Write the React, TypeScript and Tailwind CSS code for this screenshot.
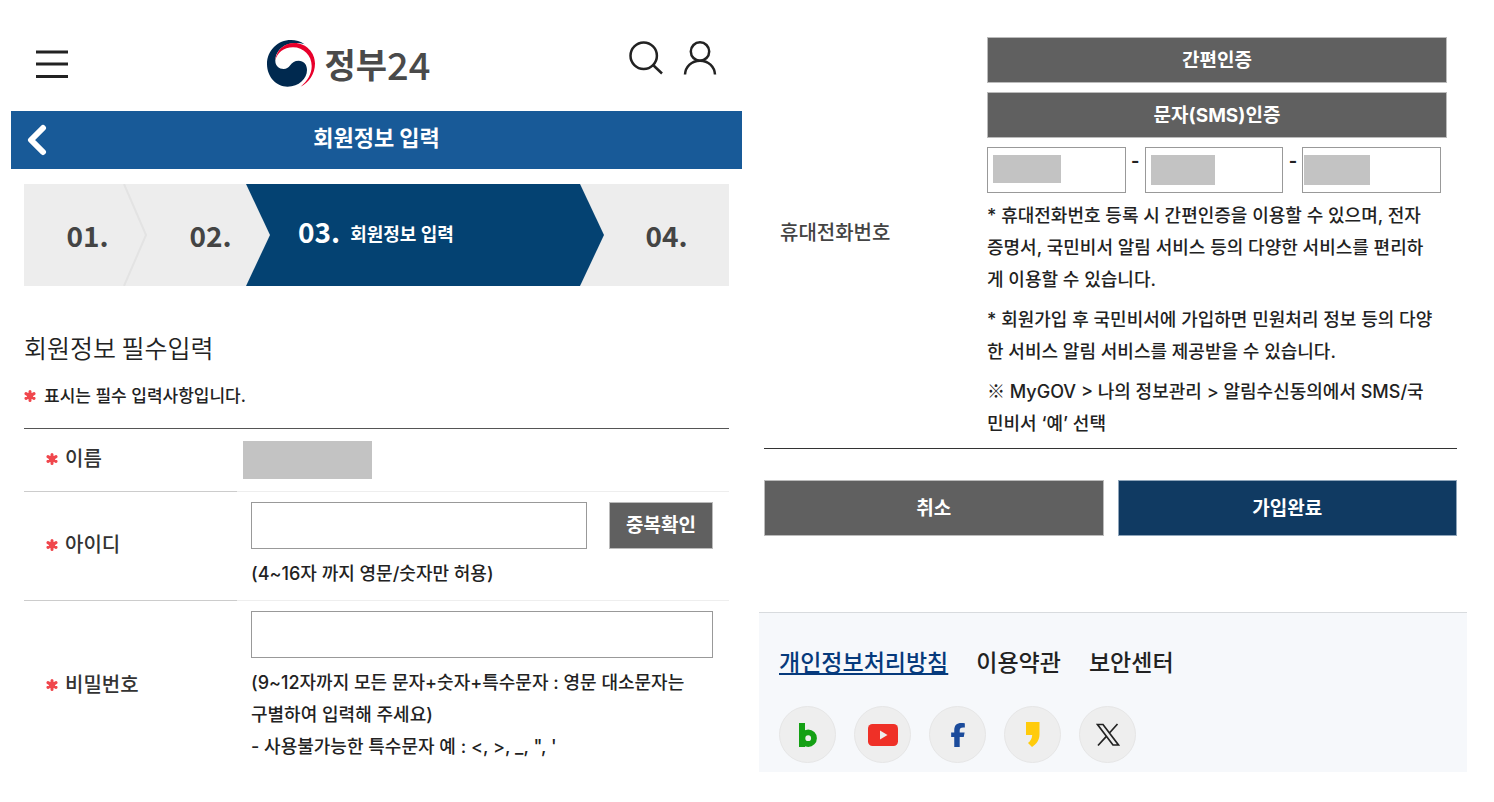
import React from "react";
import { FaFacebookF } from "react-icons/fa6";

function GovLogo() {
  return (
    <svg viewBox="0 0 48 47" className="h-[47px] w-12 shrink-0" aria-hidden="true">
      <path
        fill="#00294f"
        d="M37.5 4.200C33.500 1.300 28.800 0 24 0C10.700 0 0 10.500 0 24C0 37 9.500 46.700 20.500 46.700C32 46.700 40 38.500 40 30C40 24.500 36.500 20.800 31.700 20.800C27.800 20.800 25.200 22.800 23 25.500C21.300 27.700 19.400 29 16.700 29C12 29 8.300 26 8.300 20.500C8.500 12 15 5 24 3.600C29 2.600 33.500 2.900 37.500 4.200Z"
      />
      <path
        fill="#e8002b"
        d="M8.300 20.700C9 10.500 17 3 27.300 3C39 3 48 12.500 48 23.500C48 34 42 42.500 33.500 46.700C40.500 41 44.700 34 44.700 26C44.700 15.500 36.500 7.300 26 7.300C16.500 7.300 10 13 8.300 20.700Z"
      />
    </svg>
  );
}

function RequiredMark() {
  return (
    <svg viewBox="0 0 12 12" className="size-3 shrink-0" role="img" aria-label="필수">
      <g stroke="#f0474d" strokeWidth="3" strokeLinecap="round">
        <path d="M6 1.500V10.500M2 3.600L10 8.400M10 3.600L2 8.400" />
      </g>
      <circle cx="6" cy="6" r="3.200" fill="#f0474d" />
    </svg>
  );
}

const stepText = "ml-7 font-['Noto_Sans_CJK_KR',sans-serif] text-[28px] leading-none font-bold text-[#444]";

function Steps() {
  return (
    <ol className="flex h-[102px] bg-[#ededed]">
      <li className="flex flex-[99] items-center justify-center">
        <span className={stepText}>01.</span>
      </li>
      <li aria-hidden="true" className="w-6 shrink-0">
        <svg viewBox="0 0 24 102" preserveAspectRatio="none" className="size-full">
          <path d="M1 0L23 51L1 102" fill="none" stroke="#e3e3e3" strokeWidth="2" />
        </svg>
      </li>
      <li className="flex flex-[99] items-center justify-center">
        <span className={stepText}>02.</span>
      </li>
      <li aria-hidden="true" className="w-6 shrink-0 bg-[#044272]">
        <svg viewBox="0 0 24 102" preserveAspectRatio="none" className="size-full">
          <path d="M0 0L24 51L0 102Z" fill="#ededed" />
        </svg>
      </li>
      <li aria-current="step" className="flex flex-[310] items-center bg-[#044272] pb-2 text-white">
        <span className="ml-7 font-['Noto_Sans_CJK_KR',sans-serif] text-[28px] leading-none font-bold">03.</span>
        <span className="ml-2.5 pt-2 text-[18px] leading-none font-bold">회원정보 입력</span>
      </li>
      <li aria-hidden="true" className="w-6 shrink-0">
        <svg viewBox="0 0 24 102" preserveAspectRatio="none" className="size-full">
          <path d="M0 0L24 51L0 102Z" fill="#044272" />
        </svg>
      </li>
      <li className="flex flex-[125] items-center justify-center">
        <span className="font-['Noto_Sans_CJK_KR',sans-serif] text-[28px] leading-none font-bold text-[#444]">04.</span>
      </li>
    </ol>
  );
}

function Field({ id, label, children }: { id?: string; label: string; children: React.ReactNode }) {
  return (
    <tr className="group">
      <th scope="row" className="w-[213px] border-[#ccc] p-0 pb-0.5 pl-[22px] text-left align-middle text-[20px] leading-8 font-medium text-[#333] group-not-last:border-b">
        <label htmlFor={id} className="flex items-center gap-[7px]">
          <RequiredMark />
          {label}
        </label>
      </th>
      <td className="border-[#eee] p-0 align-top group-not-last:border-b">{children}</td>
    </tr>
  );
}

const textBox = "h-[47px] w-full min-w-0 border border-[#999] bg-white px-3 text-[18px]";
const grayButton = "border border-[#bbb] bg-[#606060] text-[19px] leading-none font-bold text-white";

function SignupForm() {
  return (
    <section className="min-w-0 flex-[731]">
      <header className="grid h-[111px] grid-cols-[1fr_auto_1fr] items-center px-[25px] pt-4">
        <button type="button" aria-label="전체 메뉴" className="w-8">
          <svg viewBox="0 0 32 30" className="h-[30px] w-8" aria-hidden="true">
            <path d="M0 3H32M0 15H32M0 27.500H32" stroke="#222" strokeWidth="2.800" />
          </svg>
        </button>
        <a href="#home" className="mr-14 flex items-center gap-2.5 font-['Noto_Sans_CJK_KR',sans-serif] text-[#4a4a4a]">
          <GovLogo />
          <span className="flex items-center leading-none">
            <span className="text-[34px] font-bold">정부</span>
            <span className="text-[38px] font-medium">24</span>
          </span>
        </a>
        <div className="flex items-center justify-end gap-5 pb-3">
          <button type="button" aria-label="검색">
            <svg viewBox="0 0 34 34" className="size-[34px]" fill="none" stroke="#222" strokeWidth="2.500" aria-hidden="true">
              <circle cx="14.700" cy="14.700" r="13.200" />
              <path d="M23.500 23.500L33 32.500" />
            </svg>
          </button>
          <button type="button" aria-label="내 정보">
            <svg viewBox="0 0 34 34" className="size-[34px]" fill="none" stroke="#222" strokeWidth="2.500" aria-hidden="true">
              <circle cx="17" cy="10.500" r="9.200" />
              <path d="M2 33.500C2.500 25.500 8.500 19.700 17 19.700S31.500 25.500 32 33.500" />
            </svg>
          </button>
        </div>
      </header>

      <div className="grid h-[58px] grid-cols-[1fr_auto_1fr] items-center bg-[#185a98] text-white">
        <button type="button" aria-label="이전" className="ml-4 w-5">
          <svg viewBox="0 0 20 32" className="h-8 w-5" aria-hidden="true">
            <path d="M16 4L4 16L16 28" fill="none" stroke="white" strokeWidth="6" strokeLinecap="round" strokeLinejoin="round" />
          </svg>
        </button>
        <h1 className="pb-1 text-[22px] leading-none font-bold">회원정보 입력</h1>
      </div>

      <div className="px-[13px] pt-[15px]">
        <Steps />
        <h2 className="mt-[43px] font-['Noto_Sans_CJK_KR',sans-serif] text-[25px] leading-9 font-[350] text-[#222]">회원정보 필수입력</h2>
        <p className="mt-[17px] flex items-center gap-2 text-[17px] leading-7 font-medium text-[#222]">
          <RequiredMark />
          표시는 필수 입력사항입니다.
        </p>
        <form className="mt-[18px]">
          <table className="w-full border-collapse border-t border-[#555] text-[18px] leading-8 font-medium text-[#222]">
            <tbody>
              <Field label="이름">
                <div className="h-[62px] px-1.5 pt-3">
                  <div className="h-[38px] w-[129px] bg-[#c3c3c3]" />
                </div>
              </Field>
              <Field id="userid" label="아이디">
                <div className="pt-2.5 pr-4 pb-2.5 pl-3.5">
                  <div className="flex gap-[22px]">
                    <input id="userid" type="text" className={textBox} />
                    <button type="button" className={`${grayButton} w-[104px] shrink-0`}>
                      중복확인
                    </button>
                  </div>
                  <p className="mt-[9px]">(4~16자 까지 영문/숫자만 허용)</p>
                </div>
              </Field>
              <Field id="password" label="비밀번호">
                <div className="pt-2.5 pr-4 pb-2 pl-3.5">
                  <input id="password" type="password" className={`${textBox} block`} />
                  <p className="mt-[9px] whitespace-nowrap">
                    (9~12자까지 모든 문자+숫자+특수문자 : 영문 대소문자는
                    <br />
                    구별하여 입력해 주세요)
                    <br />- 사용불가능한 특수문자 예 : &lt;, &gt;, _, ", '
                  </p>
                </div>
              </Field>
            </tbody>
          </table>
        </form>
      </div>
    </section>
  );
}

function PhoneBox({ label, children }: { label: string; children: React.ReactNode }) {
  return (
    <div className="relative flex-1">
      <input type="tel" aria-label={label} className="block h-[46px] w-full border border-[#999] bg-white px-3" />
      {children}
    </div>
  );
}

function PhoneSection() {
  return (
    <table className="w-full border-collapse border-b border-[#333] text-[18px] leading-8 font-medium text-[#222]">
      <tbody>
        <tr>
          <th scope="row" className="w-[223px] p-0 pt-0.5 pl-4 text-left align-middle text-[20px] font-medium text-[#444]">
            휴대전화번호
          </th>
          <td className="p-0 pt-[21px] pb-2">
            <div className="flex flex-col gap-[9px] pr-2.5">
              <button type="button" className={`${grayButton} h-[46px]`}>간편인증</button>
              <button type="button" className={`${grayButton} h-[46px]`}>문자(SMS)인증</button>
              <div className="flex pr-1.5">
                <PhoneBox label="휴대전화 앞자리">
                  <span className="absolute top-2 left-1.5 h-7 w-[68px] bg-[#c3c3c3]" />
                </PhoneBox>
                <span className="w-[19px] text-center leading-7 font-bold">-</span>
                <PhoneBox label="휴대전화 가운데자리">
                  <span className="absolute top-2 left-1.5 h-[30px] w-16 bg-[#c3c3c3]" />
                </PhoneBox>
                <span className="w-[19px] text-center leading-7 font-bold">-</span>
                <PhoneBox label="휴대전화 끝자리">
                  <span className="absolute top-2 left-0.5 h-[30px] w-[66px] bg-[#c3c3c3]" />
                </PhoneBox>
              </div>
            </div>
            <div className="mt-[7px] flex flex-col gap-2 whitespace-nowrap">
              <p>
                * 휴대전화번호 등록 시 간편인증을 이용할 수 있으며, 전자
                <br />
                증명서, 국민비서 알림 서비스 등의 다양한 서비스를 편리하
                <br />
                게 이용할 수 있습니다.
              </p>
              <p>
                * 회원가입 후 국민비서에 가입하면 민원처리 정보 등의 다양
                <br />
                한 서비스 알림 서비스를 제공받을 수 있습니다.
              </p>
              <p>
                <span className="font-['Noto_Sans_CJK_KR',sans-serif] leading-none">※</span> MyGOV &gt; 나의 정보관리 &gt; 알림수신동의에서 SMS/국
                <br />
                민비서 ‘예’ 선택
              </p>
            </div>
          </td>
        </tr>
      </tbody>
    </table>
  );
}

const social = "flex size-[57px] items-center justify-center rounded-full border border-[#e6e6e6] bg-[#eeeeee]";

function Footer() {
  return (
    <footer className="mt-[76px] h-[160px] border-t border-[#d8dbde] bg-[#f6f8fb] px-5 pt-8">
      <nav className="flex gap-7 text-[23px] leading-9 font-medium text-[#222]">
        <a href="#privacy" className="text-[#063a7c] underline decoration-2 underline-offset-2">개인정보처리방침</a>
        <a href="#terms">이용약관</a>
        <a href="#security">보안센터</a>
      </nav>
      <div className="mt-[25px] flex gap-[18px]">
        <a href="#blog" aria-label="블로그" className={social}>
          <svg viewBox="0 0 18 24" className="h-6 w-[18px]" aria-hidden="true">
            <rect width="6" height="24" fill="#14a014" />
            <circle cx="9.200" cy="15.200" r="5.800" fill="none" stroke="#14a014" strokeWidth="5.800" />
          </svg>
        </a>
        <a href="#youtube" aria-label="유튜브" className={social}>
          <svg viewBox="0 0 30 22" className="h-[22px] w-[30px]" aria-hidden="true">
            <rect width="30" height="22" rx="4.500" fill="#ef3027" />
            <path d="M12 6.500V15.500L19.500 11Z" fill="#eee" />
          </svg>
        </a>
        <a href="#facebook" aria-label="페이스북" className={social}>
          <FaFacebookF className="size-6 text-[#1b4b9b]" />
        </a>
        <a href="#story" aria-label="카카오스토리" className={social}>
          <svg viewBox="0 0 14 25" className="h-[25px] w-3.5" aria-hidden="true">
            <path d="M0 0H13.500V12C13.500 18 10.500 22 6 25L2 21C4.500 19 6 16.500 6.200 13H0Z" fill="#ffcb0b" />
          </svg>
        </a>
        <a href="#x" aria-label="X" className={social}>
          <svg viewBox="0 0 24 24" className="size-6" fill="none" stroke="#222" strokeWidth="1.700" aria-hidden="true">
            <path d="M1.500 1.500H7L22.500 22H17ZM21.500 1L13.200 10.200M10.600 13.200L2 22.500" />
          </svg>
        </a>
      </div>
    </footer>
  );
}

export default function App() {
  return (
    <main className="flex min-h-screen items-start gap-[17px] bg-white pr-[27px] pl-[11px] font-[Inter,'Noto_Sans_CJK_KR',sans-serif]">
      <SignupForm />
      <section className="min-w-0 flex-[708] pt-4">
        <div className="pr-2.5 pl-[5px]">
          <PhoneSection />
          <div className="mt-[31px] grid grid-cols-2 gap-3.5">
            <button type="button" className={`${grayButton} h-14`}>취소</button>
            <button type="submit" className="h-14 border border-[#8fa5ba] bg-[#103a62] text-[19px] leading-none font-bold text-white">
              가입완료
            </button>
          </div>
        </div>
        <Footer />
      </section>
    </main>
  );
}
